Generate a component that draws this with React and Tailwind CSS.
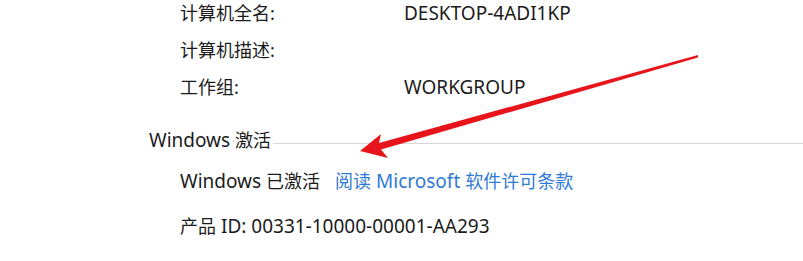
import React from 'react';

// latin runs are set a bit larger than the CJK ones, like Segoe UI next to YaHei
const L = ({ children }) => <span className="text-[19px]">{children}</span>;

const rows = [
    { label: '计算机全名:', value: 'DESKTOP-4ADI1KP' },
    { label: '计算机描述:', value: '' },
    { label: '工作组:', value: 'WORKGROUP' },
];

const App = () => {
    return (
        <div className="relative w-[803px] h-[261px] bg-white overflow-hidden text-[18px] text-[#1b1b1b] font-['Noto_Sans','Noto_Sans_CJK_SC',sans-serif]">
            {/* computer info rows */}
            <div className="pl-[180px]">
                {rows.map((row, i) => (
                    <div key={i} className={`flex h-[26px] items-center ${i > 0 ? 'mt-[11px]' : ''}`}>
                        <span className="w-[224px] whitespace-nowrap">{row.label}</span>
                        <span className="whitespace-nowrap"><L>{row.value}</L></span>
                    </div>
                ))}
            </div>

            {/* section header */}
            <div className="mt-[27px] flex h-[26px] items-center pl-[149px]">
                <span className="whitespace-nowrap"><L>Windows </L>激活</span>
                <div className="ml-[2px] mt-[6px] h-px flex-1 bg-[#d6d6d6]"></div>
            </div>

            <div className="mt-[15px] flex h-[26px] items-center pl-[180px] whitespace-nowrap">
                <span><L>Windows </L>已激活</span>
                <a href="#" className="ml-[15px] text-[#2f7bd5]">阅读<L> Microsoft </L>软件许可条款</a>
            </div>

            <div className="mt-[19px] flex h-[26px] items-center pl-[180px] whitespace-nowrap">
                <span>产品<L> ID: 00331-10000-00001-AA293</L></span>
            </div>

            {/* red annotation arrow */}
            <svg className="absolute left-0 top-0" width="803" height="261" viewBox="0 0 803 261">
                <polygon
                    points="360,151 381,134 379,143 698,55 698,57.5 381,149.5 388,158"
                    fill="#e8141c"
                />
            </svg>
        </div>
    );
};

export default App;
